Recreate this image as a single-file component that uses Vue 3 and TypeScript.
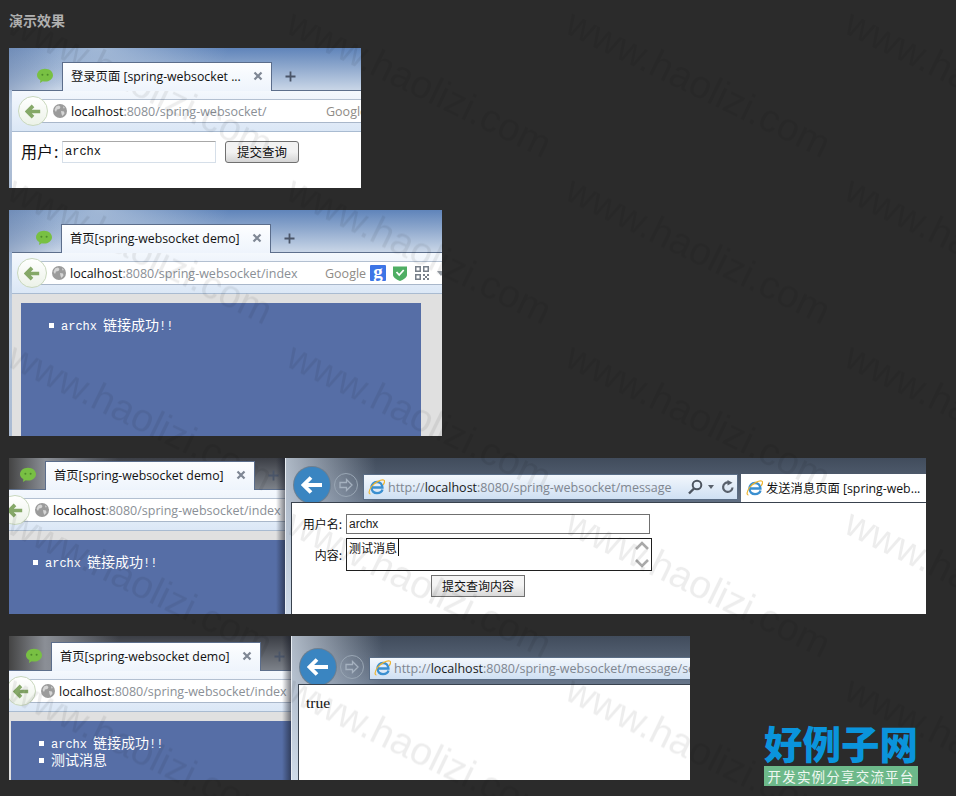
<template>
  <div class="page">
    <h3 class="heading">演示效果</h3>

    <div class="shots">
      <div v-for="shot in shots" :key="shot.id" class="shot" :style="{ width: shot.width + 'px', height: shot.height + 'px' }">
        <!-- firefox window -->
        <section class="ff" :class="{ shaded: shot.ie }" :style="{ width: shot.ff.width + 'px' }">
          <div class="strip" :class="shot.ff.glass" :style="{ height: shot.ff.stripH + 'px', paddingLeft: shot.ff.iconX + 'px' }">
            <svg class="wechat" width="16" height="16" viewBox="0 0 16 16">
              <path d="M8 .8c4.400 0 8 2.800 8 6.400s-3.600 6.400-8 6.400c-.8 0-1.500-.1-2.200-.3L3 15l.4-2.900C1.300 11 0 9.200 0 7.200 0 3.600 3.600.8 8 .8z" fill="#78c043" />
              <circle cx="5.400" cy="6.800" r="1" fill="#4d8a2b" />
              <circle cx="10.600" cy="6.800" r="1" fill="#4d8a2b" />
            </svg>
            <div class="tab">
              <span class="tab-title">{{ shot.ff.title }}</span>
              <svg class="tab-close" width="10" height="10" viewBox="0 0 10 10">
                <path d="M1.500 1.500l7 7M8.500 1.500l-7 7" stroke="#7f8794" stroke-width="2.200" />
              </svg>
            </div>
            <svg class="tab-plus" width="11" height="11" viewBox="0 0 11 11">
              <path d="M5.500 .5v10M.5 5.500h10" stroke="#4a5568" stroke-width="1.800" />
            </svg>
          </div>

          <div class="nav" :style="{ marginLeft: shot.ff.frame + 'px', paddingLeft: shot.ff.backX - shot.ff.frame + 'px' }">
            <div class="urlbar">
              <span class="back">
                <svg width="16" height="15" viewBox="0 0 20 18">
                  <path d="M10 2L3 9l7 7M4 9h15" fill="none" stroke="#85a868" stroke-width="4.600" />
                </svg>
              </span>
              <svg class="globe" width="14" height="14" viewBox="0 0 14 14">
                <circle cx="7" cy="7" r="7" fill="#9b9b9b" />
                <path d="M3 2.500l3-1 1.500 1.500-1 2-2.500.5-1 2.500-1.500-2zM8 7l3 .5.500 2-2 2.500-1-2zM10 2l2 2-1.500.5z" fill="#d6d6d6" />
              </svg>
              <span class="url"><b>localhost</b>{{ shot.ff.url }}</span>
              <span class="engine">Google</span>
              <span class="gicon">g</span>
              <svg class="shield" width="14" height="16" viewBox="0 0 14 16">
                <path d="M0 1.500h14v8.500c0 2.500-4 5-7 6-3-1-7-3.500-7-6z" fill="#4fae64" />
                <path d="M3.500 7l2.700 3 4.500-5" fill="none" stroke="#fff" stroke-width="1.800" />
              </svg>
              <svg class="qr" width="14" height="14" viewBox="0 0 14 14" fill="#777f89">
                <path d="M0 0h6v6H0zM1.500 1.500v3h3v-3zM8 0h6v6H8zM9.500 1.500v3h3v-3zM0 8h6v6H0zM1.500 9.500v3h3v-3zM8 8h2v2H8zM12 8h2v2h-2zM10 10h2v2h-2zM8 12h2v2H8zM12 12h2v2h-2z" fill-rule="evenodd" />
              </svg>
              <i class="engine-arrow"></i>
            </div>
          </div>

          <div v-if="shot.ff.kind === 'login'" class="login">
            <span class="login-label">用户<span class="colon">:</span></span>
            <div class="login-input">archx</div>
            <button class="login-btn">提交查询</button>
          </div>
          <div v-else class="gray" :style="{ padding: shot.ff.inset, marginLeft: shot.ff.frame + 'px' }">
            <ul class="panel" :style="{ paddingLeft: shot.ff.listPad + 'px' }">
              <li><span class="mono">archx</span><span class="linked">链接成功</span><span class="mono">!!</span></li>
              <li v-for="line in shot.ff.lines" :key="line">{{ line }}</li>
            </ul>
          </div>
        </section>

        <!-- ie window next to it -->
        <section v-if="shot.ie" class="ie">
          <div class="ie-bar" :style="{ height: shot.ie.barH + 'px', paddingLeft: shot.ie.backLeft + 'px' }">
            <span class="ie-back">
              <svg width="22" height="18" viewBox="0 0 22 18">
                <path d="M10 1.500L2.500 9l7.500 7.500M3.500 9H21" fill="none" stroke="#fff" stroke-width="3.800" />
              </svg>
            </span>
            <span class="ie-forward">
              <svg width="16" height="14" viewBox="0 0 16 14">
                <path d="M8.500 1.500L14 7l-5.500 5.500V9.500H2v-5h6.500z" fill="none" stroke="#a5b1bf" stroke-width="1.300" />
              </svg>
            </span>
            <div class="ie-url" :style="{ width: shot.ie.urlW + 'px', height: shot.ie.urlH + 'px', marginBottom: shot.ie.urlGap + 'px' }">
              <svg class="ie-logo" width="17" height="17" viewBox="0 0 17 17">
                <path d="M14.500 10.500c-.6 2.200-3 3.600-5.500 3.600-3.200 0-5.500-2.300-5.500-5.600S5.800 3 9 3s5.300 2.400 5.400 5.500H4" fill="none" stroke="#3a8fd0" stroke-width="2.400" />
                <path d="M2.500 15C.5 15 .5 12 3.500 7.500 7 3 13 .5 15.500 1c1.800.5 1 3-.5 5" fill="none" stroke="#eeb42e" stroke-width="1.200" />
              </svg>
              <span class="ie-url-text">http://<b>localhost</b>{{ shot.ie.url }}</span>
              <svg class="ie-search" width="17" height="16" viewBox="0 0 17 16">
                <circle cx="10" cy="6" r="4.300" fill="none" stroke="#4d5560" stroke-width="2" />
                <path d="M7 9.500L2 14.500" stroke="#4d5560" stroke-width="2.400" />
              </svg>
              <i class="ie-drop"></i>
              <svg class="ie-refresh" width="14" height="14" viewBox="0 0 14 14">
                <path d="M11.500 7.500A4.700 4.700 0 1 1 7.500 2.500" fill="none" stroke="#59616c" stroke-width="2.200" />
                <path d="M6.500 0l5 2.800-5 2.800z" fill="#59616c" />
              </svg>
            </div>
            <div v-if="shot.ie.tab" class="ie-tab">
              <svg class="ie-logo" width="17" height="17" viewBox="0 0 17 17">
                <path d="M14.500 10.500c-.6 2.200-3 3.600-5.500 3.600-3.200 0-5.500-2.300-5.500-5.600S5.800 3 9 3s5.300 2.400 5.400 5.500H4" fill="none" stroke="#3a8fd0" stroke-width="2.400" />
                <path d="M2.500 15C.5 15 .5 12 3.500 7.500 7 3 13 .5 15.500 1c1.800.5 1 3-.5 5" fill="none" stroke="#eeb42e" stroke-width="1.200" />
              </svg>
              <span>{{ shot.ie.tab }}</span>
            </div>
          </div>

          <div class="ie-page" :style="{ marginLeft: shot.ie.pageLeft + 'px' }">
            <form v-if="shot.ie.kind === 'form'" class="send-form" @submit.prevent>
              <label class="send-label">用户名:</label>
              <div class="send-input">archx</div>
              <label class="send-label send-label-low">内容:</label>
              <div class="send-area">
                <span class="caret">测试消息</span>
                <svg class="area-arrows" width="18" height="29" viewBox="0 0 18 29">
                  <path d="M3 9l6-6 6 6M3 20l6 6 6-6" fill="none" stroke="#a9a9a9" stroke-width="2.600" />
                </svg>
              </div>
              <button class="send-btn">提交查询内容</button>
            </form>
            <p v-else class="result">true</p>
          </div>
        </section>
      </div>
    </div>

    <!-- site watermark, one tile repeated over everything -->
    <svg class="watermark" width="956" height="796">
      <defs>
        <pattern id="wm" x="-1" y="10" width="279" height="166.67" patternUnits="userSpaceOnUse">
          <text x="6" y="22" transform="rotate(26 6 22)" font-family="Liberation Sans, Arial, sans-serif" font-size="39" fill="#000" fill-opacity="0.07">www.haolizi.com</text>
        </pattern>
      </defs>
      <rect width="956" height="796" fill="url(#wm)" />
    </svg>

    <div class="logo">
      <div class="logo-name">好例子网</div>
      <div class="logo-sub">开发实例分享交流平台</div>
    </div>
  </div>
</template>

<script setup lang="ts">
interface FfWindow {
  width: number
  stripH: number
  iconX: number
  frame: number
  backX: number
  glass: string
  title: string
  url: string
  kind: "login" | "list"
  inset?: string
  listPad?: number
  lines?: string[]
}

interface IeWindow {
  barH: number
  backLeft: number
  pageLeft: number
  urlW: number
  urlH: number
  urlGap: number
  url: string
  tab?: string
  kind: "form" | "result"
}

interface Shot {
  id: number
  width: number
  height: number
  ff: FfWindow
  ie?: IeWindow
}

const shots: Shot[] = [
  {
    id: 1,
    width: 352,
    height: 140,
    ff: {
      width: 352,
      stripH: 42,
      iconX: 28,
      frame: 3,
      backX: 24,
      glass: "glass-blue",
      title: "登录页面 [spring-websocket ...",
      url: ":8080/spring-websocket/",
      kind: "login",
    },
  },
  {
    id: 2,
    width: 433,
    height: 226,
    ff: {
      width: 433,
      stripH: 42,
      iconX: 27,
      frame: 3,
      backX: 23,
      glass: "glass-blue",
      title: "首页[spring-websocket demo]",
      url: ":8080/spring-websocket/index",
      kind: "list",
      inset: "9px 21px 0 9px",
      listPad: 40,
    },
  },
  {
    id: 3,
    width: 917,
    height: 156,
    ff: {
      width: 276,
      stripH: 31,
      iconX: 11,
      frame: 0,
      backX: 6,
      glass: "glass-dark",
      title: "首页[spring-websocket demo]",
      url: ":8080/spring-websocket/index",
      kind: "list",
      inset: "9px 0 0 0",
      listPad: 36,
    },
    ie: {
      barH: 44,
      backLeft: 8,
      pageLeft: 5,
      urlW: 375,
      urlH: 26,
      urlGap: 2,
      url: ":8080/spring-websocket/message",
      tab: "发送消息页面 [spring-web...",
      kind: "form",
    },
  },
  {
    id: 4,
    width: 681,
    height: 144,
    ff: {
      width: 282,
      stripH: 34,
      iconX: 17,
      frame: 0,
      backX: 12,
      glass: "glass-dark",
      title: "首页[spring-websocket demo]",
      url: ":8080/spring-websocket/index",
      kind: "list",
      inset: "9px 0 0 2px",
      listPad: 40,
      lines: ["测试消息"],
    },
    ie: {
      barH: 48,
      backLeft: 8,
      pageLeft: 6,
      urlW: 400,
      urlH: 23,
      urlGap: 4,
      url: ":8080/spring-websocket/message/send",
      kind: "result",
    },
  },
]
</script>

<style>
html,
body {
  margin: 0;
  background: #2b2b2b;
}
</style>

<style scoped>
.page {
  position: relative;
  width: 956px;
  height: 796px;
  overflow: hidden;
  padding: 10px 0 0 9px;
  box-sizing: border-box;
  background: #2b2b2b;
  font-family: "Open Sans", "Noto Sans CJK SC", sans-serif;
}

.heading {
  margin: 0 0 18px;
  font-size: 14px;
  line-height: 20px;
  font-weight: 700;
  color: #b0b0b0;
  font-family: "Noto Sans CJK SC", sans-serif;
}

.shots {
  display: flex;
  flex-direction: column;
  gap: 22px;
}

.shot {
  display: flex;
  overflow: hidden;
}

/* firefox */
.ff {
  position: relative;
  flex: none;
  display: flex;
  flex-direction: column;
  overflow: hidden;
  background: linear-gradient(180deg, #7f9cc6 0%, #b9c9de 40%, #a9bad2 100%);
}

.shaded::after {
  content: "";
  position: absolute;
  top: 0;
  right: 0;
  bottom: 0;
  width: 9px;
  background: linear-gradient(90deg, rgba(20, 24, 36, 0), rgba(20, 24, 36, 0.55));
  pointer-events: none;
  z-index: 2;
}

.strip {
  flex: none;
  display: flex;
  align-items: flex-end;
  box-sizing: border-box;
}

.glass-blue {
  background:
    linear-gradient(90deg, rgba(110, 135, 175, 0.55) 0, rgba(110, 135, 175, 0) 50px),
    radial-gradient(ellipse 130px 40px at 90px 0, rgba(205, 218, 232, 0.6), transparent),
    linear-gradient(180deg, #5f84ba 0%, #8ea8cd 45%, #c9d6e7 100%);
}

.glass-dark {
  background:
    linear-gradient(90deg, #444 0, #8b8f96 36px, rgba(120, 126, 138, 0) 110px),
    linear-gradient(180deg, #3b3e45 0%, #7c8189 100%);
}

.wechat {
  flex: none;
  margin: 0 9px 6px 0;
}

.tab {
  position: relative;
  z-index: 1;
  flex: none;
  display: flex;
  align-items: center;
  width: 210px;
  height: 29px;
  margin-bottom: -1px;
  padding: 0 8px 2px 8px;
  box-sizing: border-box;
  border: 1px solid #5b6d8b;
  border-bottom: 0;
  background: linear-gradient(180deg, #fdfeff, #eef4fc);
}

.tab-title {
  flex: 1;
  overflow: hidden;
  white-space: nowrap;
  font-size: 12.300px;
  color: #111;
}

.tab-close {
  flex: none;
}

.tab-plus {
  flex: none;
  margin: 0 0 8px 13px;
}

.nav {
  position: relative;
  flex: none;
  height: 42px;
  padding-top: 8px;
  box-sizing: border-box;
  border-top: 1px solid #5d6f8c;
  border-bottom: 1px solid #a9bbd1;
  background: linear-gradient(180deg, #f4f8fd, #dbe7f6);
  overflow: hidden;
}

.urlbar {
  position: relative;
  display: flex;
  align-items: center;
  width: 640px;
  height: 24px;
  padding-left: 20px;
  box-sizing: border-box;
  border-top: 1px solid #b3c0d1;
  border-bottom: 1px solid #a9b7ca;
  background: #fff;
  font-size: 12.500px;
  color: #8a8f96;
}

.back {
  position: absolute;
  left: -15px;
  top: -4px;
  display: flex;
  align-items: center;
  justify-content: center;
  width: 30px;
  height: 30px;
  box-sizing: border-box;
  border: 1px solid #c9d8bd;
  border-radius: 50%;
  background: linear-gradient(180deg, #fff, #ecf2e8);
}

.globe {
  flex: none;
  margin-right: 4px;
}

.url {
  flex: none;
  width: 255px;
  white-space: nowrap;
}

.url b {
  font-weight: 400;
  color: #111;
}

.engine {
  flex: none;
  width: 45px;
  color: #8f8b86;
}

.gicon {
  flex: none;
  width: 16px;
  height: 16px;
  margin-right: 7px;
  border-radius: 1px;
  background: #3d75e6;
  color: #fff;
  font: 700 19px/14px "Liberation Serif", serif;
  text-align: center;
  overflow: hidden;
}

.shield {
  flex: none;
  margin-right: 8px;
}

.qr {
  flex: none;
  margin-right: 8px;
}

.engine-arrow {
  flex: none;
  border: 4px solid transparent;
  border-top: 5px solid #9aa0a8;
  margin-top: 4px;
}

.login {
  flex: 1;
  display: flex;
  align-items: flex-start;
  margin-left: 3px;
  padding: 9px 0 0 9px;
  background: #fff;
}

.login-label {
  width: 41px;
  font-size: 16px;
  line-height: 21px;
  color: #111;
  font-family: "Noto Sans CJK SC", sans-serif;
}

.colon {
  margin-left: 1px;
}

.login-input {
  width: 154px;
  height: 22px;
  padding-left: 2px;
  box-sizing: border-box;
  border: 1px solid #d6dfe9;
  border-top-color: #a8a8a8;
  font: 12px/21px "Liberation Mono", monospace;
  color: #111;
}

.login-btn {
  width: 74px;
  height: 22px;
  margin-left: 9px;
  padding: 0;
  border: 1px solid #707070;
  border-radius: 3px;
  background: linear-gradient(180deg, #f2f2f2 50%, #d4d4d4);
  font: 12.500px/20px "Noto Sans CJK SC", sans-serif;
  color: #111;
}

.gray {
  flex: 1;
  min-height: 0;
  display: flex;
  box-sizing: border-box;
  background: #e0e0e0;
}

.panel {
  flex: 1;
  margin: 0;
  padding-top: 13px;
  padding-right: 0;
  list-style: none;
  background: #566ea6;
  color: #fff;
  font-family: "Noto Sans CJK SC", sans-serif;
  font-size: 14px;
  line-height: 17px;
}

.panel li {
  position: relative;
  height: 17px;
}

.panel li::before {
  content: "";
  position: absolute;
  left: -12px;
  top: 7px;
  width: 5px;
  height: 5px;
  background: #fff;
}

.mono {
  font: 12px/17px "Liberation Mono", monospace;
}

.linked {
  margin-left: 6px;
}

/* ie */
.ie {
  flex: 1;
  display: flex;
  flex-direction: column;
  min-width: 0;
  border-left: 1px solid #e8edf3;
  background:
    linear-gradient(90deg, rgba(210, 220, 232, 0.75) 0, rgba(190, 205, 222, 0) 90px),
    linear-gradient(180deg, #414c5c 0%, #74849a 45%, #c4d6ea 100%);
}

.ie-bar {
  flex: none;
  display: flex;
  align-items: flex-end;
  box-sizing: border-box;
  overflow: hidden;
}

.ie-back {
  flex: none;
  display: flex;
  align-items: center;
  justify-content: center;
  width: 36px;
  height: 36px;
  margin-bottom: -1px;
  border-radius: 50%;
  background: #3a85c1;
  box-shadow: 0 0 0 1px #6d7f90;
}

.ie-forward {
  flex: none;
  display: flex;
  align-items: center;
  justify-content: center;
  width: 24px;
  height: 24px;
  margin: 0 5px 5px 4px;
  box-sizing: border-box;
  border: 1px solid #99a6b4;
  border-radius: 50%;
}

.ie-url {
  flex: none;
  display: flex;
  align-items: center;
  padding-left: 4px;
  box-sizing: border-box;
  border: 1px solid #5a6d85;
  background: linear-gradient(180deg, #f3f7fc, #cfe0f3);
  font-size: 12.500px;
  color: #7f8690;
  white-space: nowrap;
  overflow: hidden;
}

.ie-url b {
  font-weight: 400;
  color: #1b1b1b;
}

.ie-logo {
  flex: none;
  margin-right: 3px;
}

.ie-url-text {
  flex: none;
  width: 298px;
}

.ie-search {
  flex: none;
  margin-left: 1px;
}

.ie-drop {
  flex: none;
  margin: 3px 7px 0 4px;
  border: 3.500px solid transparent;
  border-top: 4px solid #59616c;
}

.ie-refresh {
  flex: none;
}

.ie-tab {
  flex: none;
  display: flex;
  align-items: center;
  width: 185px;
  height: 28px;
  margin-left: 3px;
  padding-left: 5px;
  box-sizing: border-box;
  background: #fff;
  font-size: 12.300px;
  color: #111;
  white-space: nowrap;
}

.ie-page {
  flex: 1;
  min-height: 0;
  box-sizing: border-box;
  border: 1px solid #39424e;
  border-right: 0;
  border-bottom: 0;
  background: #fff;
}

.send-form {
  display: grid;
  grid-template-columns: 50px auto;
  justify-content: start;
  column-gap: 4px;
  row-gap: 4px;
  padding-top: 11px;
  font-family: "Noto Sans CJK SC", sans-serif;
  font-size: 12px;
  color: #111;
}

.send-label {
  text-align: right;
  line-height: 20px;
}

.send-label-low {
  align-self: center;
}

.send-input {
  width: 304px;
  height: 20px;
  padding-left: 2px;
  box-sizing: border-box;
  border: 1px solid #707070;
  font: 12px/18px "Liberation Sans", sans-serif;
  color: #222;
}

.send-area {
  position: relative;
  width: 306px;
  height: 33px;
  padding: 1px 2px;
  box-sizing: border-box;
  border: 1px solid #1f1f1f;
  line-height: 15px;
}

.caret {
  padding-right: 1px;
  border-right: 1px solid #111;
}

.area-arrows {
  position: absolute;
  right: 0;
  top: 1px;
}

.send-btn {
  grid-column: 2;
  width: 94px;
  height: 22px;
  margin-left: 85px;
  padding: 0;
  border: 1px solid #707070;
  background: linear-gradient(180deg, #f4f4f4 45%, #d9d9d9);
  font: 12px/20px "Noto Sans CJK SC", sans-serif;
  color: #111;
}

.result {
  margin: 9px 0 0 7px;
  font: 15.500px/18px "Liberation Serif", serif;
  color: #111;
}

.watermark {
  position: absolute;
  left: 0;
  top: 0;
  pointer-events: none;
}

.logo {
  position: absolute;
  right: 38px;
  bottom: 10px;
  width: 154px;
}

.logo-name {
  height: 43px;
  overflow: hidden;
  font: 900 38.500px/38px "Noto Sans CJK SC", sans-serif;
  color: #0a94dc;
  white-space: nowrap;
}

.logo-sub {
  height: 20px;
  background: #6db98a;
  color: #eef7f1;
  font: 13.500px/20px "Noto Sans CJK SC", sans-serif;
  letter-spacing: 1.200px;
  text-align: center;
  white-space: nowrap;
}
</style>
